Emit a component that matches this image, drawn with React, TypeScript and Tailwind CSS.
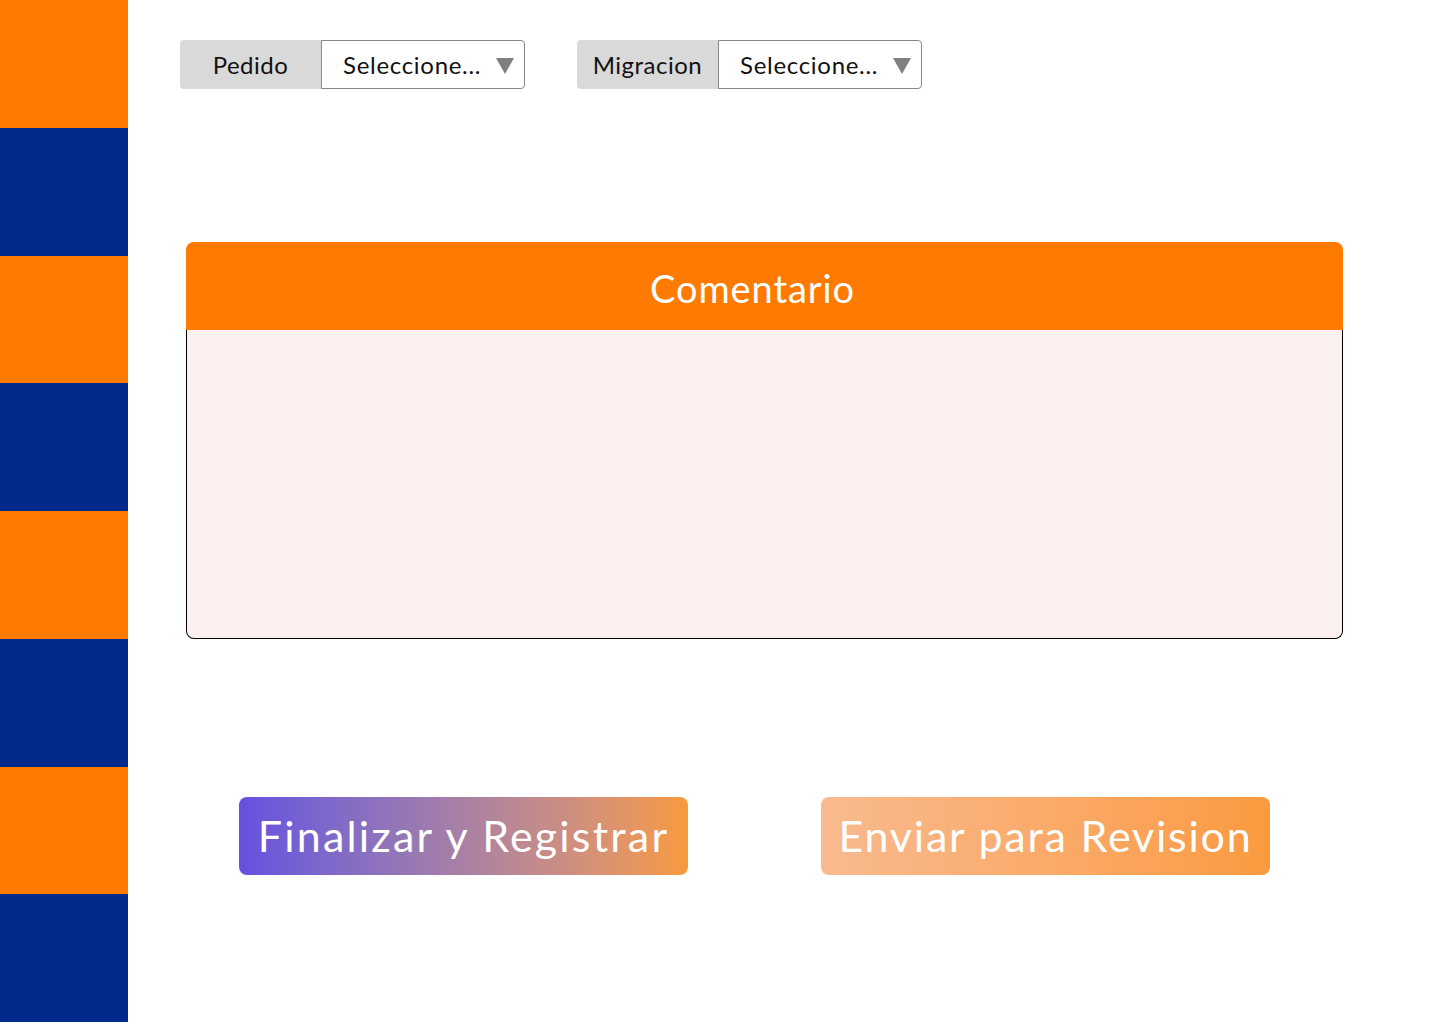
import React from "react";

const stripes = ["bg-[#ff7a00]", "bg-[#00298c]", "bg-[#ff7a00]", "bg-[#00298c]", "bg-[#ff7a00]", "bg-[#00298c]", "bg-[#ff7a00]", "bg-[#00298c]"];

function SelectGroup({ label }: { label: string }) {
  return (
    <div className="flex h-[49px] w-[345px]">
      <div className="flex w-[141px] items-center justify-center rounded-l-[4px] bg-[#d9d9d9] text-[24px] tracking-[0.5px] text-[#111]">
        {label}
      </div>
      <div className="flex flex-1 items-center justify-between rounded-r-[4px] border border-[#888] bg-white pl-[21px] pr-[10px] text-[24px] tracking-[0.7px] text-[#111]">
        <span>Seleccione...</span>
        <svg width="18" height="16" viewBox="0 0 18 16" className="mt-[3px]">
          <polygon points="0,0 18,0 9,16" fill="#808080" />
        </svg>
      </div>
    </div>
  );
}

export default function App() {
  return (
    <div className="flex h-[1024px] w-[1440px] items-start bg-white" style={{ fontFamily: "Lato, 'Noto Sans', sans-serif" }}>
      <div className="flex h-[1022px] w-[128px] flex-col">
        {stripes.map((c, i) => (
          <div key={i} className={`flex-1 ${c}`} />
        ))}
      </div>
      <div className="flex flex-1 flex-col">
        <div className="ml-[52px] mt-[40px] flex gap-[52px]">
          <SelectGroup label="Pedido" />
          <SelectGroup label="Migracion" />
        </div>
        <div className="ml-[58px] mt-[153px] flex h-[397px] w-[1157px] flex-col">
          <div className="flex h-[88px] items-center justify-center rounded-t-[8px] bg-[#ff7a00] pr-[24px] pt-[5px] text-[38px] tracking-[0.9px] text-white">
            Comentario
          </div>
          <div className="flex-1 rounded-b-[8px] border border-t-0 border-black bg-[#fdf1f0]" />
        </div>
        <div className="ml-[111px] mt-[158px] flex gap-[133px]">
          <button className="flex h-[78px] w-[449px] items-center justify-center rounded-[8px] bg-gradient-to-r from-[#6550e0] to-[#f89a3c] text-[43px] tracking-[2.2px] text-white">
            Finalizar y Registrar
          </button>
          <button className="flex h-[78px] w-[449px] items-center justify-center rounded-[8px] bg-gradient-to-r from-[#f8ba8e] to-[#fb9a3e] text-[43px] tracking-[1.8px] text-white">
            Enviar para Revision
          </button>
        </div>
      </div>
    </div>
  );
}
